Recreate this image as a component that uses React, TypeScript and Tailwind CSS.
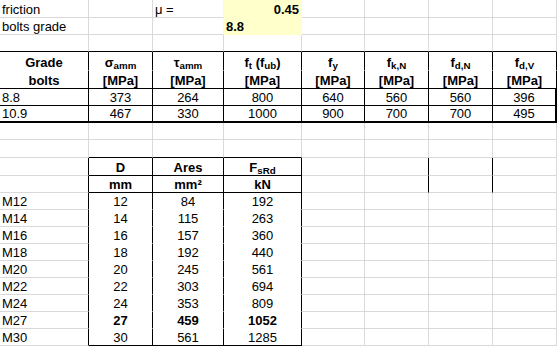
import type { ReactNode } from "react";

type Edge = "g" | "k" | "k2" | "n" | "y";
type Align = "l" | "c" | "r";

const RIGHT: Record<Edge, string> = {
  g: "border-r border-r-[#d9d9d9]",
  k: "border-r border-r-black",
  k2: "border-r-2 border-r-black",
  n: "border-r border-r-white",
  y: "border-r border-r-[#ffffcc]",
};

const BOTTOM: Record<Edge, string> = {
  g: "border-b border-b-[#d9d9d9]",
  k: "border-b border-b-black",
  k2: "border-b-2 border-b-black",
  n: "border-b border-b-white",
  y: "border-b border-b-[#ffffcc]",
};

const ALIGN: Record<Align, string> = {
  l: "justify-start pl-[2px]",
  c: "justify-center",
  r: "justify-end pr-[2px]",
};

type CellSpec = {
  v?: ReactNode;
  r?: Edge;
  b?: Edge;
  a?: Align;
  bold?: boolean;
  yellow?: boolean;
};

function Cell({ v, r = "g", b = "g", a = "l", bold, yellow }: CellSpec) {
  return (
    <div
      className={`flex items-end overflow-visible whitespace-nowrap ${RIGHT[r]} ${BOTTOM[b]} ${ALIGN[a]} ${
        bold ? "font-bold" : ""
      } ${yellow ? "bg-[#ffffcc]" : "bg-white"}`}
    >
      <span className="leading-[15px]">{v}</span>
    </div>
  );
}

const blank = (n: number, r: Edge = "g", b: Edge = "g"): CellSpec[] =>
  Array.from({ length: n }, () => ({ r, b }));

function Sym({ base, sub, tail }: { base: string; sub: string; tail?: ReactNode }) {
  return (
    <>
      {base}
      <sub>{sub}</sub>
      {tail}
    </>
  );
}

const table1 = [
  ["8.8", "373", "264", "800", "640", "560", "560", "396"],
  ["10.9", "467", "330", "1000", "900", "700", "700", "495"],
];

const bolts = [
  ["M12", "12", "84", "192"],
  ["M14", "14", "115", "263"],
  ["M16", "16", "157", "360"],
  ["M18", "18", "192", "440"],
  ["M20", "20", "245", "561"],
  ["M22", "22", "303", "694"],
  ["M24", "24", "353", "809"],
  ["M27", "27", "459", "1052"],
  ["M30", "30", "561", "1285"],
];

function buildRows(): CellSpec[][] {
  const rows: CellSpec[][] = [];

  // inputs
  rows.push([
    { v: "friction" },
    {},
    { v: "μ =", r: "y" },
    { v: "0.45", a: "r", bold: true, yellow: true, r: "y", b: "y" },
    ...blank(4),
  ]);
  rows.push([
    { v: "bolts grade" },
    {},
    { r: "y" },
    { v: "8.8", bold: true, yellow: true, r: "y", b: "y" },
    ...blank(4),
  ]);
  rows.push(blank(8, "g", "k"));

  // table 1 header
  const h1: ReactNode[] = [
    "Grade",
    <Sym base="σ" sub="amm" />,
    <Sym base="τ" sub="amm" />,
    <Sym base="f" sub="t" tail={<> (f<sub>ub</sub>)</>} />,
    <Sym base="f" sub="y" />,
    <Sym base="f" sub="k,N" />,
    <Sym base="f" sub="d,N" />,
    <Sym base="f" sub="d,V" />,
  ];
  rows.push(h1.map((v) => ({ v, a: "c" as Align, bold: true, r: "k" as Edge, b: "n" as Edge })));
  rows.push(
    ["bolts", "[MPa]", "[MPa]", "[MPa]", "[MPa]", "[MPa]", "[MPa]", "[MPa]"].map((v) => ({
      v,
      a: "c" as Align,
      bold: true,
      r: "k" as Edge,
      b: "k" as Edge,
    }))
  );
  table1.forEach((row, i) => {
    rows.push(
      row.map((v, j) => ({
        v,
        a: (j === 0 ? "l" : "c") as Align,
        r: (j === 7 ? "k2" : "k") as Edge,
        b: (i === 1 ? "k2" : "k") as Edge,
      }))
    );
  });

  rows.push(blank(8));
  rows.push([{}, ...blank(3, "g", "k"), ...blank(4)]);

  // table 2 header
  rows.push([
    { r: "k" },
    { v: "D", a: "c", bold: true, r: "k", b: "k" },
    { v: "Ares", a: "c", bold: true, r: "k", b: "k" },
    { v: <Sym base="F" sub="sRd" />, a: "c", bold: true, r: "k", b: "k" },
    {},
    { r: "k" },
    { r: "k" },
    {},
  ]);
  rows.push([
    { r: "k" },
    { v: "mm", a: "c", bold: true, r: "k", b: "k" },
    { v: "mm²", a: "c", bold: true, r: "k", b: "k" },
    { v: "kN", a: "c", bold: true, r: "k", b: "k" },
    {},
    { r: "k" },
    { r: "k" },
    {},
  ]);

  bolts.forEach((row, i) => {
    const last = i === bolts.length - 1;
    const strong = row[0] === "M27";
    rows.push([
      { v: row[0], r: "k" },
      ...row.slice(1).map((v) => ({
        v,
        a: "c" as Align,
        bold: strong,
        r: "k" as Edge,
        b: (last ? "k" : "n") as Edge,
      })),
      ...blank(4),
    ]);
  });

  return rows;
}

export default function App() {
  const rows = buildRows();
  return (
    <div className="h-[346px] w-[557px] overflow-hidden bg-white font-['Liberation_Sans',Arial,sans-serif] text-[13px] text-black">
      <div className="grid grid-cols-[89px_64px_71px_78px_63px_64px_64px_64px] grid-rows-[18px_17px_17px_19px_18px_17px_17px_17px_18px_18px_17px_17px_17px_17px_17px_17px_17px_17px_17px_17px]">
        {rows.flatMap((row, i) => row.map((c, j) => <Cell key={`${i}-${j}`} {...c} />))}
      </div>
    </div>
  );
}
